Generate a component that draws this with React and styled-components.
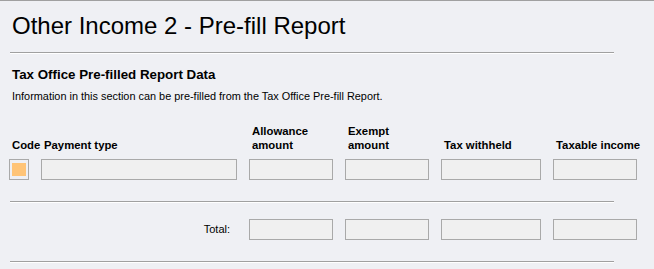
import styled, { createGlobalStyle } from "styled-components";

const GlobalStyle = createGlobalStyle`
  body {
    margin: 0;
    background: #eff0f4;
    font-family: "Liberation Sans", Arial, sans-serif;
    color: #000;
  }
`;

const columns = [
  { label: ["Allowance", "amount"] },
  { label: ["Exempt", "amount"] },
  { label: ["Tax withheld"] },
  { label: ["Taxable income"] },
];

function App() {
  return (
    <>
      <GlobalStyle />
      <Page>
        <Title>Other Income 2 - Pre-fill Report</Title>
        <Rule />
        <SectionTitle>Tax Office Pre-filled Report Data</SectionTitle>
        <Note>Information in this section can be pre-filled from the Tax Office Pre-fill Report.</Note>

        <Table>
          <Head>Code</Head>
          <Head>Payment type</Head>
          {columns.map((col) => (
            <Head key={col.label.join(" ")}>
              {col.label.map((line) => (
                <div key={line}>{line}</div>
              ))}
            </Head>
          ))}

          <CodeBox>
            <CodeFill />
          </CodeBox>
          <Field readOnly />
          {columns.map((col) => (
            <Field key={col.label.join(" ")} readOnly />
          ))}
        </Table>

        <Rule $gap={21} />

        <Table $top={16}>
          <TotalLabel>Total:</TotalLabel>
          {columns.map((col) => (
            <Field key={col.label.join(" ")} readOnly />
          ))}
        </Table>

        <Rule $gap={21} />
      </Page>
    </>
  );
}

export default App;

const Page = styled.div`
  border-top: 1px solid #a0a0a0;
  padding: 11px 0 0 0;
  min-height: 268px;
`;

const Title = styled.h1`
  margin: 0 0 0 12px;
  font-size: 24px;
  font-weight: 400;
  line-height: 28px;
`;

const Rule = styled.div`
  width: 604px;
  margin: ${(p) => p.$gap ?? 12}px 0 0 10px;
  border-top: 1px solid #a0a0a0;
  border-bottom: 1px solid #ffffff;
`;

const SectionTitle = styled.h2`
  margin: 13px 0 0 12px;
  font-size: 13.33px;
  font-weight: 700;
  line-height: 16px;
`;

const Note = styled.p`
  margin: 6px 0 0 12px;
  font-size: 10.9px;
  line-height: 14px;
`;

const Table = styled.div`
  display: grid;
  grid-template-columns: 20px 196px 84px 84px 100px 84px;
  column-gap: 12px;
  row-gap: 7px;
  margin: ${(p) => p.$top ?? 21}px 0 0 9px;
`;

const Head = styled.div`
  align-self: end;
  padding-left: 3px;
  font-size: 11.33px;
  font-weight: 700;
  line-height: 14px;
  white-space: nowrap;
`;

const Field = styled.input`
  box-sizing: border-box;
  width: 100%;
  height: 21px;
  margin: 0;
  padding: 0 3px;
  background: #f0f0f0;
  border: 1px solid #a9a9a9;
  border-radius: 0;
  outline: none;
  font-family: inherit;
  font-size: 11px;
`;

const CodeBox = styled.div`
  box-sizing: border-box;
  height: 21px;
  padding: 3px 2px 3px 2px;
  border: 1px solid #a9a9a9;
  background: #eff0f4;
`;

const CodeFill = styled.div`
  height: 100%;
  background: #ffc477;
`;

const TotalLabel = styled.div`
  grid-column: 1 / 3;
  justify-self: end;
  padding-right: 7px;
  font-size: 11px;
  line-height: 21px;
`;
